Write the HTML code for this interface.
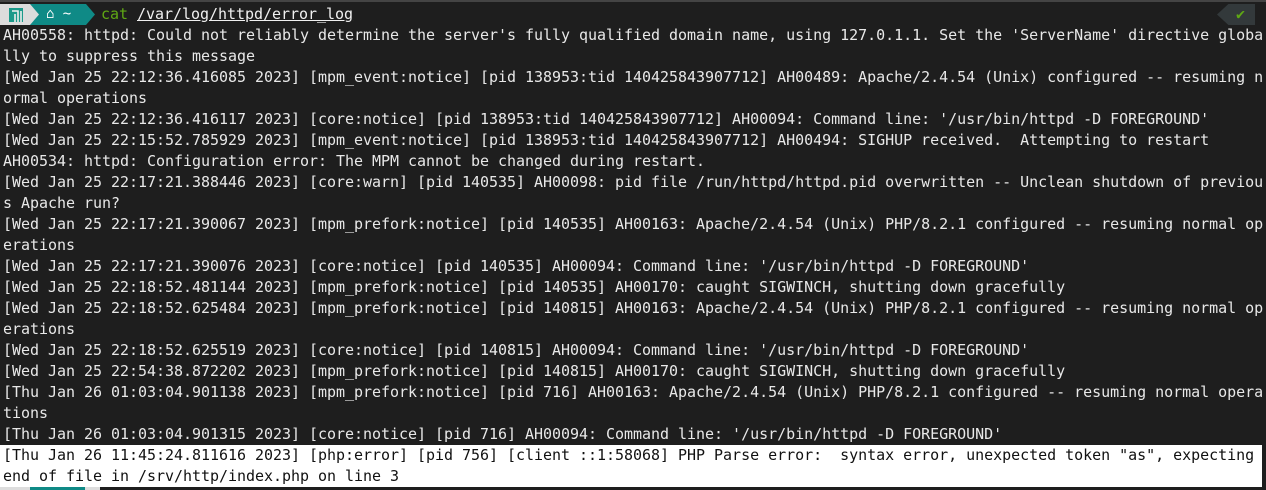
<!DOCTYPE html>
<html><head><style>
body{margin:0;width:1266px;height:490px;background:#1e1e1e;overflow:hidden;font-family:"DejaVu Sans Mono","Liberation Mono",monospace;font-size:15px;color:#e8e8e8}
.t{position:absolute;left:3px;top:4px;right:0}
.l{height:21px;line-height:21px;white-space:pre;letter-spacing:-0.03px}
.hl{background:#fff;color:#111;width:1259px;margin-left:-3px;padding-left:3px}
.a{position:absolute;top:0}
</style></head><body>
<div style="position:absolute;left:0;top:0;width:1266px;height:2px;background:#444"></div>
<div class="t">
<div class="l" style="position:relative">
<span class="a" style="left:-3px;width:30px;height:21px;background:#dcdcdc"></span>
<svg class="a" style="left:6px;top:4px" width="14" height="14"><rect width="14" height="14" fill="#1b9a8a"/><path d="M3 3h6v11M6 6v8M12 3v11" stroke="#eee" stroke-width="1.6" fill="none"/></svg>
<span class="a" style="left:27px;width:56px;height:21px;background:#0f8a86"></span>
<svg class="a" style="left:27px" width="10" height="21"><path d="M0 0L9 10.5L0 21Z" fill="#dcdcdc"/></svg>
<span class="a" style="left:43px;color:#fff;font-size:14px">&#8962; ~</span>
<svg class="a" style="left:83px" width="10" height="21"><path d="M0 0L9 10.5L0 21Z" fill="#0f8a86"/></svg>
<span class="a" style="left:98px;color:#5fa814">cat</span><span class="a" style="left:134px;text-decoration:underline;color:#f0f0f0">/var/log/httpd/error_log</span>
<span class="a" style="left:1214px;width:38px;height:21px;background:#33393b;clip-path:polygon(0 50%,30% 0,100% 0,100% 100%,30% 100%)"></span>
<span class="a" style="left:1233px;color:#5fa814">✔</span>
</div>
<div class="l">AH00558: httpd: Could not reliably determine the server's fully qualified domain name, using 127.0.1.1. Set the 'ServerName' directive globa</div>
<div class="l">lly to suppress this message</div>
<div class="l">[Wed Jan 25 22:12:36.416085 2023] [mpm_event:notice] [pid 138953:tid 140425843907712] AH00489: Apache/2.4.54 (Unix) configured -- resuming n</div>
<div class="l">ormal operations</div>
<div class="l">[Wed Jan 25 22:12:36.416117 2023] [core:notice] [pid 138953:tid 140425843907712] AH00094: Command line: '/usr/bin/httpd -D FOREGROUND'</div>
<div class="l">[Wed Jan 25 22:15:52.785929 2023] [mpm_event:notice] [pid 138953:tid 140425843907712] AH00494: SIGHUP received.  Attempting to restart</div>
<div class="l">AH00534: httpd: Configuration error: The MPM cannot be changed during restart.</div>
<div class="l">[Wed Jan 25 22:17:21.388446 2023] [core:warn] [pid 140535] AH00098: pid file /run/httpd/httpd.pid overwritten -- Unclean shutdown of previou</div>
<div class="l">s Apache run?</div>
<div class="l">[Wed Jan 25 22:17:21.390067 2023] [mpm_prefork:notice] [pid 140535] AH00163: Apache/2.4.54 (Unix) PHP/8.2.1 configured -- resuming normal op</div>
<div class="l">erations</div>
<div class="l">[Wed Jan 25 22:17:21.390076 2023] [core:notice] [pid 140535] AH00094: Command line: '/usr/bin/httpd -D FOREGROUND'</div>
<div class="l">[Wed Jan 25 22:18:52.481144 2023] [mpm_prefork:notice] [pid 140535] AH00170: caught SIGWINCH, shutting down gracefully</div>
<div class="l">[Wed Jan 25 22:18:52.625484 2023] [mpm_prefork:notice] [pid 140815] AH00163: Apache/2.4.54 (Unix) PHP/8.2.1 configured -- resuming normal op</div>
<div class="l">erations</div>
<div class="l">[Wed Jan 25 22:18:52.625519 2023] [core:notice] [pid 140815] AH00094: Command line: '/usr/bin/httpd -D FOREGROUND'</div>
<div class="l">[Wed Jan 25 22:54:38.872202 2023] [mpm_prefork:notice] [pid 140815] AH00170: caught SIGWINCH, shutting down gracefully</div>
<div class="l">[Thu Jan 26 01:03:04.901138 2023] [mpm_prefork:notice] [pid 716] AH00163: Apache/2.4.54 (Unix) PHP/8.2.1 configured -- resuming normal opera</div>
<div class="l">tions</div>
<div class="l">[Thu Jan 26 01:03:04.901315 2023] [core:notice] [pid 716] AH00094: Command line: '/usr/bin/httpd -D FOREGROUND'</div>
<div class="l hl">[Thu Jan 26 11:45:24.811616 2023] [php:error] [pid 756] [client ::1:58068] PHP Parse error:  syntax error, unexpected token "as", expecting</div>
<div class="l hl">end of file in /srv/http/index.php on line 3</div>
</div>
<div style="position:absolute;left:0;top:487px;width:100px;height:3px;background:#ddd"></div>
<div style="position:absolute;left:30px;top:487px;width:55px;height:3px;background:#0f8a86"></div>
</body></html>
